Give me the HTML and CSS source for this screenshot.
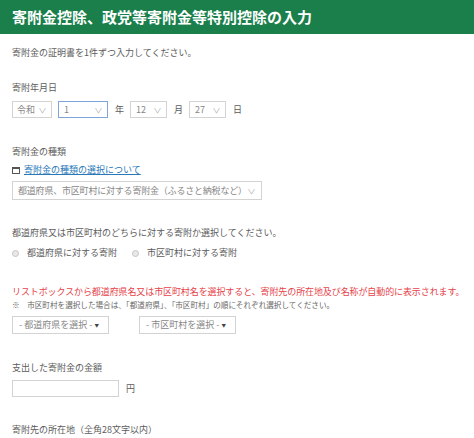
FILE: index.html
```html
<!DOCTYPE html>
<html lang="ja">
<head>
<meta charset="utf-8">
<link rel="stylesheet" href="styles.css">
</head>
<body>
<header class="header"><h1 class="title">寄附金控除、政党等寄附金等特別控除の入力</h1></header>
<main class="content">
  <p class="intro">寄附金の証明書を1件ずつ入力してください。</p>

  <section class="sec sec-date">
    <div class="label">寄附年月日</div>
    <div class="date-row">
      <div class="sel sel-era"><span class="val">令和</span><span class="arr">∨</span></div>
      <div class="sel sel-year focus"><span class="val">1</span><span class="arr">∨</span></div>
      <span class="unit">年</span>
      <div class="sel sel-md"><span class="val">12</span><span class="arr">∨</span></div>
      <span class="unit">月</span>
      <div class="sel sel-md"><span class="val">27</span><span class="arr">∨</span></div>
      <span class="unit">日</span>
    </div>
  </section>

  <section class="sec sec-kind">
    <div class="label">寄附金の種類</div>
    <div class="link-row">
      <svg class="win-icon" width="8" height="7" viewBox="0 0 8 7"><rect x="0.5" y="0.5" width="7" height="6" fill="none" stroke="#555" stroke-width="1"/><rect x="0" y="0" width="8" height="2" fill="#555"/></svg>
      <a class="link" href="#">寄附金の種類の選択について</a>
    </div>
    <div class="sel sel-wide"><span class="val">都道府県、市区町村に対する寄附金（ふるさと納税など）</span><span class="arr">∨</span></div>
  </section>

  <section class="sec sec-target">
    <div class="label">都道府県又は市区町村のどちらに対する寄附か選択してください。</div>
    <div class="radio-row">
      <label class="radio"><span class="dot"></span>都道府県に対する寄附</label>
      <label class="radio"><span class="dot"></span>市区町村に対する寄附</label>
    </div>
  </section>

  <section class="sec sec-list">
    <p class="warn">リストボックスから都道府県名又は市区町村名を選択すると、寄附先の所在地及び名称が自動的に表示されます。</p>
    <p class="note">※　市区町村を選択した場合は、「都道府県」、「市区町村」の順にそれぞれ選択してください。</p>
    <div class="pref-row">
      <div class="sel sel-pref"><span class="val">- 都道府県を選択 -</span><span class="tri">▼</span></div>
      <div class="sel sel-pref"><span class="val">- 市区町村を選択 -</span><span class="tri">▼</span></div>
    </div>
  </section>

  <section class="sec sec-amount">
    <div class="label">支出した寄附金の金額</div>
    <div class="amount-row">
      <div class="input"></div>
      <span class="unit">円</span>
    </div>
  </section>

  <section class="sec sec-loc">
    <div class="label">寄附先の所在地（全角28文字以内）</div>
  </section>
</main>
</body>
</html>
```

FILE: styles.css
```css
html, body {
  margin: 0;
  padding: 0;
  background: #ffffff;
}
body {
  font-family: "Noto Sans CJK JP", "Noto Sans", sans-serif;
  color: #5c5c5c;
  font-size: 9px;
  width: 474px;
  height: 438px;
  overflow: hidden;
}
.header {
  background: #1b7f4c;
  height: 34px;
  display: flex;
  align-items: center;
  padding-left: 12px;
}
.title {
  margin: 0;
  color: #ffffff;
  font-size: 15px;
  font-weight: 700;
  line-height: 20px;
}
.content {
  padding-left: 12px;
}
.intro {
  margin: 12px 0 0;
  line-height: 14px;
}
.label {
  line-height: 14px;
}
.sec-date { margin-top: 21px; }
.date-row {
  margin-top: 6px;
  display: flex;
  align-items: center;
  height: 17px;
}
.sel {
  box-sizing: border-box;
  border: 1px solid #d3d3d3;
  background: #fff;
  display: flex;
  align-items: center;
  justify-content: space-between;
  color: #888;
  height: 17px;
  padding: 0 5px 0 4px;
}
.sel .val { line-height: 14px; }
.sel .arr {
  font-size: 7px;
  color: #aaa;
  transform: scaleX(1.2);
}
.sel-era { width: 40px; }
.sel-year { width: 50px; margin-left: 6px; padding-left: 5px; }
.sel-year.focus { border-color: #7ea6d6; }
.sel-md { width: 37px; padding-left: 5px; }
.unit {
  margin: 0 6px 0 7px;
  color: #5c5c5c;
}
.sec-kind { margin-top: 27px; }
.link-row {
  margin-top: 4px;
  display: flex;
  align-items: center;
  line-height: 14px;
}
.win-icon { margin-right: 4px; }
.link {
  color: #2a78b8;
  text-decoration: underline;
}
.sel-wide {
  margin-top: 4px;
  width: 250px;
  height: 19px;
  padding: 0 6px 0 5px;
}
.sel-wide .val { color: #888; letter-spacing: -0.2px; }
.sec-target { margin-top: 26px; }
.radio-row {
  margin-top: 6px;
  display: flex;
  align-items: center;
  line-height: 14px;
  gap: 15px;
}
.radio {
  display: flex;
  align-items: center;
  gap: 8px;
  color: #5c5c5c;
}
.dot {
  box-sizing: border-box;
  width: 7px;
  height: 7px;
  border-radius: 50%;
  border: 1px solid #c4c4c4;
  background: #e8e8e8;
}
.sec-list { margin-top: 25px; }
.warn {
  margin: 0;
  color: #e6434a;
  line-height: 14px;
  letter-spacing: -0.1px;
}
.note {
  margin: 0;
  font-size: 7.6px;
  line-height: 12px;
  color: #666;
}
.pref-row {
  margin-top: 5px;
  display: flex;
  gap: 30px;
}
.sel-pref {
  width: 97px;
  height: 18px;
  padding: 0 9px 0 6px;
}
.sel-pref .val { color: #888; }
.sel-pref .tri {
  font-size: 4.5px;
  color: #444;
}
.sec-amount { margin-top: 27px; }
.amount-row {
  margin-top: 5px;
  display: flex;
  align-items: center;
}
.input {
  box-sizing: border-box;
  width: 107px;
  height: 17px;
  border: 1px solid #d3d3d3;
}
.amount-row .unit { margin-left: 7px; }
.sec-loc { margin-top: 26px; }
```
